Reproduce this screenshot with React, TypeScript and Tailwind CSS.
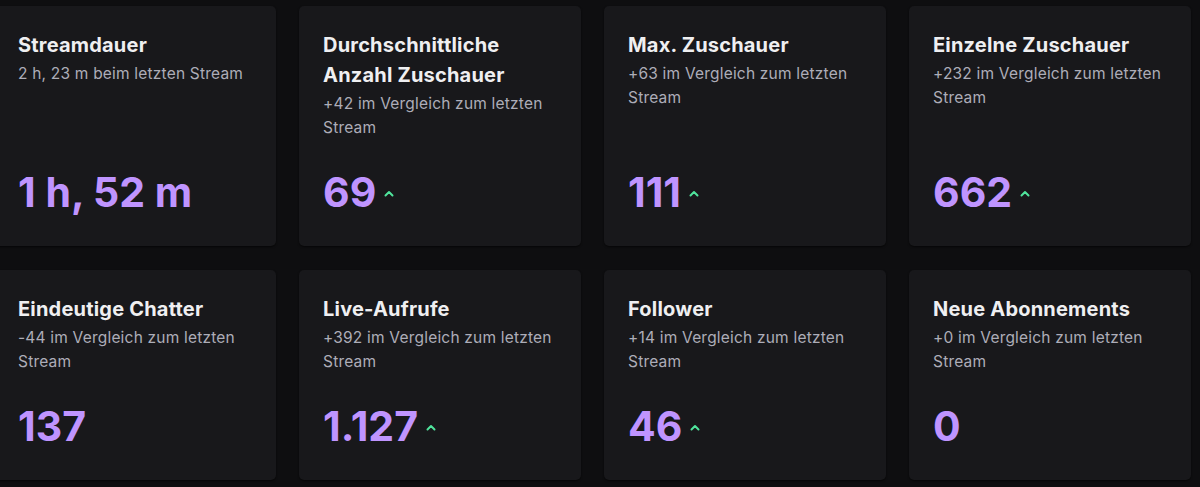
import React from "react";

type Stat = { title: string; sub: string; value: string; up?: boolean };

const stats: Stat[] = [
  { title: "Streamdauer", sub: "2 h, 23 m beim letzten Stream", value: "1 h, 52 m" },
  { title: "Durchschnittliche Anzahl Zuschauer", sub: "+42 im Vergleich zum letzten Stream", value: "69", up: true },
  { title: "Max. Zuschauer", sub: "+63 im Vergleich zum letzten Stream", value: "111", up: true },
  { title: "Einzelne Zuschauer", sub: "+232 im Vergleich zum letzten Stream", value: "662", up: true },
  { title: "Eindeutige Chatter", sub: "-44 im Vergleich zum letzten Stream", value: "137" },
  { title: "Live-Aufrufe", sub: "+392 im Vergleich zum letzten Stream", value: "1.127", up: true },
  { title: "Follower", sub: "+14 im Vergleich zum letzten Stream", value: "46", up: true },
  { title: "Neue Abonnements", sub: "+0 im Vergleich zum letzten Stream", value: "0" },
];

function Caret() {
  return (
    <svg width="10" height="7" viewBox="0 0 10 7" className="ml-[8px] mt-[2px]">
      <path d="M1.5 5.5 L5 2 L8.5 5.5" fill="none" stroke="#4fe39c" strokeWidth="2" strokeLinecap="round" strokeLinejoin="round" />
    </svg>
  );
}

export default function App() {
  return (
    <div className="w-[1200px] h-[487px] overflow-hidden bg-[#0e0e10]" style={{ fontFamily: "Inter, 'Noto Sans', sans-serif" }}>
      <div className="ml-[-6px] mt-[6px] grid grid-cols-[repeat(4,282px)] gap-x-[23px] gap-y-[24px]">
        {stats.map((s) => (
          <div key={s.title} className="rounded-[5px] bg-[#18181b] shadow-[0_1px_2px_rgba(0,0,0,0.6)] px-[24px] pt-[24px] pb-[22px] flex flex-col justify-between">
            <div>
              <div className="text-[20px] leading-[30px] font-bold tracking-[0.2px] text-[#efeff1] pr-2">{s.title}</div>
              <div className="mt-[2px] text-[15.5px] leading-[24px] tracking-[0.2px] text-[#adadb8]">{s.sub}</div>
            </div>
            <div className="mt-[21px] flex items-center">
              <span className="text-[41px] leading-[63px] font-bold text-[#bf94ff]">{s.value}</span>
              {s.up && <Caret />}
            </div>
          </div>
        ))}
      </div>
    </div>
  );
}
